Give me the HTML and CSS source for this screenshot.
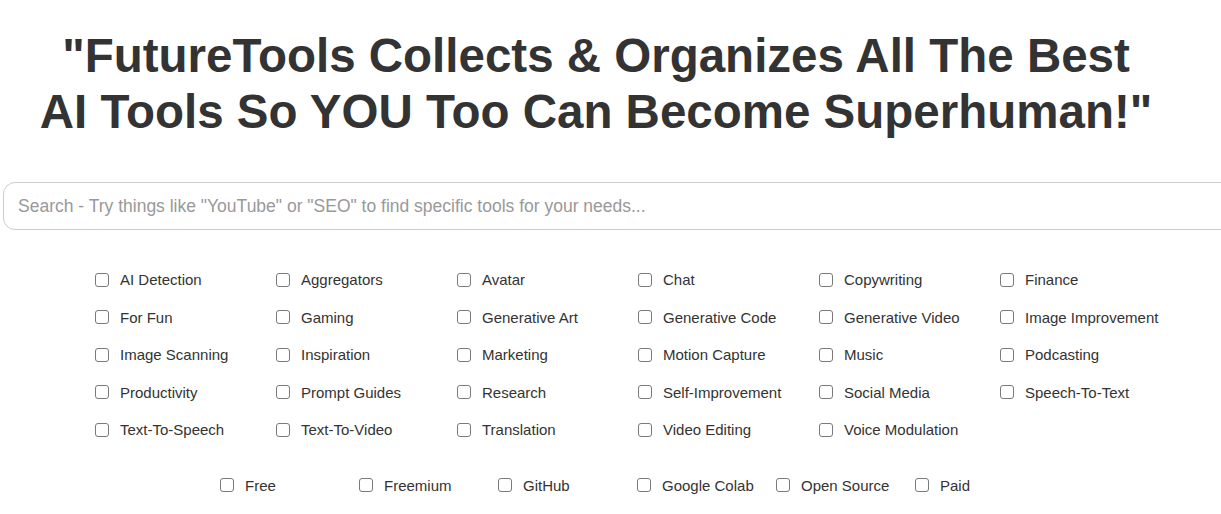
FILE: index.html
```html
<!DOCTYPE html>
<html>
<head>
<meta charset="utf-8">
<link rel="stylesheet" href="styles.css">
</head>
<body>
<div class="page">
  <h1 class="title">"FutureTools Collects &amp; Organizes All The Best<br>AI Tools So YOU Too Can Become Superhuman!"</h1>
  <input class="search" type="text" placeholder="Search - Try things like &quot;YouTube&quot; or &quot;SEO&quot; to find specific tools for your needs...">
  <div class="cats">
    <label class="opt"><input type="checkbox"><span>AI Detection</span></label>
    <label class="opt"><input type="checkbox"><span>Aggregators</span></label>
    <label class="opt"><input type="checkbox"><span>Avatar</span></label>
    <label class="opt"><input type="checkbox"><span>Chat</span></label>
    <label class="opt"><input type="checkbox"><span>Copywriting</span></label>
    <label class="opt"><input type="checkbox"><span>Finance</span></label>
    <label class="opt"><input type="checkbox"><span>For Fun</span></label>
    <label class="opt"><input type="checkbox"><span>Gaming</span></label>
    <label class="opt"><input type="checkbox"><span>Generative Art</span></label>
    <label class="opt"><input type="checkbox"><span>Generative Code</span></label>
    <label class="opt"><input type="checkbox"><span>Generative Video</span></label>
    <label class="opt"><input type="checkbox"><span>Image Improvement</span></label>
    <label class="opt"><input type="checkbox"><span>Image Scanning</span></label>
    <label class="opt"><input type="checkbox"><span>Inspiration</span></label>
    <label class="opt"><input type="checkbox"><span>Marketing</span></label>
    <label class="opt"><input type="checkbox"><span>Motion Capture</span></label>
    <label class="opt"><input type="checkbox"><span>Music</span></label>
    <label class="opt"><input type="checkbox"><span>Podcasting</span></label>
    <label class="opt"><input type="checkbox"><span>Productivity</span></label>
    <label class="opt"><input type="checkbox"><span>Prompt Guides</span></label>
    <label class="opt"><input type="checkbox"><span>Research</span></label>
    <label class="opt"><input type="checkbox"><span>Self-Improvement</span></label>
    <label class="opt"><input type="checkbox"><span>Social Media</span></label>
    <label class="opt"><input type="checkbox"><span>Speech-To-Text</span></label>
    <label class="opt"><input type="checkbox"><span>Text-To-Speech</span></label>
    <label class="opt"><input type="checkbox"><span>Text-To-Video</span></label>
    <label class="opt"><input type="checkbox"><span>Translation</span></label>
    <label class="opt"><input type="checkbox"><span>Video Editing</span></label>
    <label class="opt"><input type="checkbox"><span>Voice Modulation</span></label>
  </div>
  <div class="pricing">
    <label class="opt"><input type="checkbox"><span>Free</span></label>
    <label class="opt"><input type="checkbox"><span>Freemium</span></label>
    <label class="opt"><input type="checkbox"><span>GitHub</span></label>
    <label class="opt"><input type="checkbox"><span>Google Colab</span></label>
    <label class="opt"><input type="checkbox"><span>Open Source</span></label>
    <label class="opt"><input type="checkbox"><span>Paid</span></label>
  </div>
</div>
</body>
</html>
```
FILE: styles.css
```css
html, body {
  margin: 0;
  padding: 0;
  background: #fff;
  overflow: hidden;
}
.page {
  font-family: "Liberation Sans", Arial, sans-serif;
  color: #333;
}
.title {
  width: 1192px;
  margin: 0;
  padding-top: 28px;
  text-align: center;
  font-size: 47.5px;
  line-height: 56px;
  font-weight: bold;
  color: #333;
}
.search {
  display: block;
  box-sizing: border-box;
  width: 1260px;
  height: 48px;
  margin: 42px 0 0 3px;
  padding: 0 14px;
  border: 1px solid #ccc;
  border-radius: 12px;
  font-family: "Liberation Sans", Arial, sans-serif;
  font-size: 17.5px;
  color: #333;
  outline: none;
}
.search::placeholder {
  color: #999;
}
.cats {
  display: grid;
  grid-template-columns: repeat(6, 181px);
  grid-auto-rows: 37.5px;
  padding-left: 91px;
  margin-top: 31px;
}
.pricing {
  display: grid;
  grid-template-columns: repeat(6, 139px);
  padding-left: 216px;
  margin-top: 18px;
}
.opt {
  display: flex;
  align-items: center;
  font-size: 15px;
  height: 37.5px;
}
.opt input {
  appearance: none;
  -webkit-appearance: none;
  box-sizing: border-box;
  margin: 0 11px 0 4px;
  width: 14px;
  height: 14px;
  border: 1px solid #7a7a7a;
  border-radius: 3px;
  background: #fff;
}
```
